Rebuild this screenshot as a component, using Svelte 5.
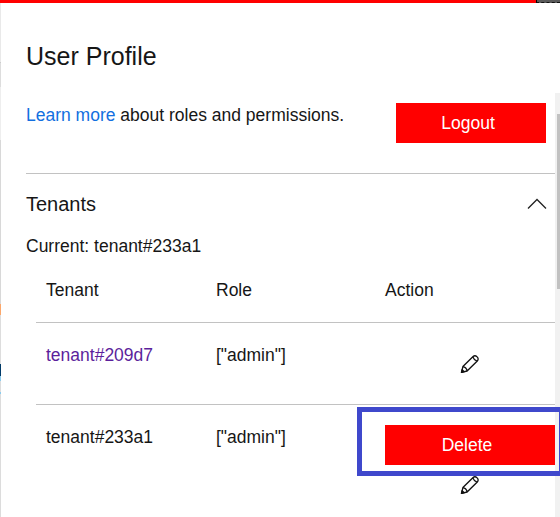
<script>
  const tenants = [
    { id: 'tenant#209d7', role: '["admin"]', link: true },
    { id: 'tenant#233a1', role: '["admin"]', link: false }
  ];
</script>

{#snippet pencil()}
  <svg class="pencil" width="20" height="20" viewBox="0 0 20 20" aria-hidden="true">
    <path d="M1.5 18.4 L2.9 12.6 L13.1 2.6 C15.5 .3 20 4.2 17.3 6.9 L7.1 17 Z M2.9 12.6 C5 12.9 6.7 14.6 7.1 17 M12.9 2.9 C13.6 5.2 14.8 6.4 17 7.1" />
    <path class="tip" d="M1.5 18.4 L2.1 15.7 L4.2 17.7 Z" />
  </svg>
{/snippet}

<div class="page">
  <div class="topbar"><span></span></div>
  <div class="shell">
    <div class="backdrop"></div>
    <main>
      <h1>User Profile</h1>
      <div class="body">
        <div class="content">
          <div class="intro">
            <p><a href="#roles">Learn more</a> about roles and permissions.</p>
            <button class="logout">Logout</button>
          </div>
          <section>
            <div class="heading">
              <h2>Tenants</h2>
              <svg width="20" height="12" viewBox="0 0 20 12" aria-hidden="true"><path d="M1 10.5 L10 1.5 L19 10.5" /></svg>
            </div>
            <p class="current">Current: tenant#233a1</p>
            <div class="table">
              <div class="row head"><span>Tenant</span><span>Role</span><span>Action</span></div>
              {#each tenants as t}
                <div class="row">
                  {#if t.link}<a class="visited" href="#tenant">{t.id}</a>{:else}<span>{t.id}</span>{/if}
                  <span>{t.role}</span>
                  <div class="actions" class:own={!t.link}>
                    {#if !t.link}<button class="delete">Delete</button>{/if}
                    {@render pencil()}
                  </div>
                </div>
              {/each}
            </div>
          </section>
        </div>
        <div class="scroll"><div class="thumb"></div></div>
      </div>
    </main>
  </div>
  <div class="highlight"></div>
</div>

<style>
  .page { position: relative; width: 560px; height: 517px; overflow: hidden; background: #fff; display: flex; flex-direction: column;
    font: 17.5px/22px "Liberation Sans", Arial, sans-serif; color: #161616; }
  h1, h2, p { margin: 0; font-weight: 400; }
  a { color: #136fe0; text-decoration: none; }
  .topbar { height: 3px; flex: none; background: #f00; display: flex; justify-content: flex-end; }
  .topbar span { width: 23px; border-left: 1px solid #000; height: 2px; background: #5a5a5a; border-bottom: 1px dashed #111; }
  .shell { display: flex; flex: 1; min-height: 0; }
  .backdrop { width: 1px; flex: none; background: linear-gradient(#e9e9e9 0 59px, #ccc 59px 60px, #ddd 60px 84px, #eee 84px 137px, #d8d8d8 137px 301px, #fba76b 301px 312px, #ddd 312px 361px, #003a68 361px 373px, #8bcbed 373px 378px, #ddd 378px 389px, #8bcbed 389px 391px, #dcdcdc 391px); }
  main { flex: 1; display: flex; flex-direction: column; min-width: 0; }
  h1 { font-size: 25px; line-height: 30px; padding: 38px 0 22px 25px; height: 30px; flex: none; }
  .body { flex: 1; min-height: 0; display: flex; }
  .content { width: 529px; flex: none; margin-left: 25px; }
  .intro { height: 80px; display: flex; justify-content: space-between; border-bottom: 1px solid #c2c2c2; }
  .intro p { padding-top: 11px; }
  button { appearance: none; border: 0; border-radius: 0; margin: 0; padding: 0 6px 0 0; background: #f00; color: #fff; font: inherit; height: 40px; }
  .logout { width: 150px; margin: 10px 9px 0 0; }
  .heading { display: flex; justify-content: space-between; padding: 18px 8px 0 0; height: 42px; }
  h2 { font-size: 20px; line-height: 24px; }
  .heading svg { margin-top: 6px; fill: none; stroke: #222; stroke-width: 1.3; }
  .current { height: 22px; padding-top: 1px; }
  .table { margin: 12px 0 0 10px; }
  .row { display: grid; grid-template-columns: 170px 169px 170px; padding: 21px 0 0 10px; height: 60px; border-top: 1px solid #c2c2c2; }
  .head { height: 43px; padding-top: 10px; border-top: 0; }
  .visited { color: #5c1f9c; }
  .actions { display: flex; flex-direction: column; align-items: center; padding-top: 10px; }
  .own { padding-top: 0; margin-top: -1px; gap: 10px; }
  .delete { width: 170px; flex: none; }
  .pencil { flex: none; fill: none; stroke: #111; stroke-width: 1.35; stroke-linejoin: round; }
  .tip { fill: #111; }
  .scroll { width: 5px; flex: none; background: #f1f1f1; padding-top: 21px; }
  .thumb { margin-left: 2px; height: 175px; background: #c1c1c1; }
  .highlight { position: absolute; left: 357px; top: 407px; width: 197px; height: 59px; border: 5px solid #3f48cc; pointer-events: none; }
</style>
